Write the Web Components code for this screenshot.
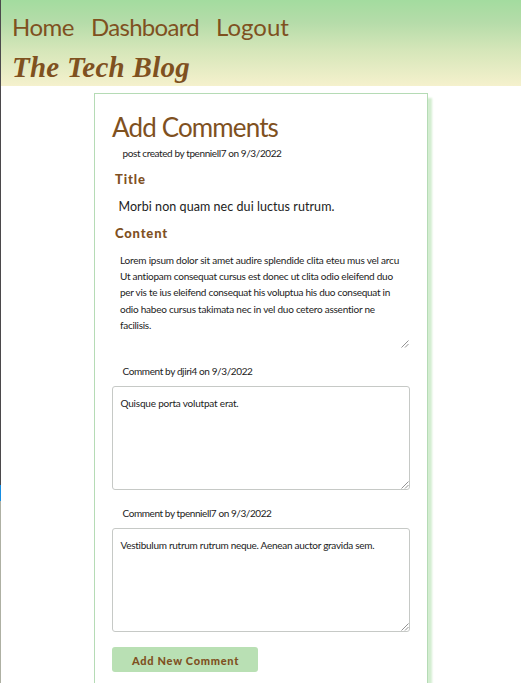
<!DOCTYPE html>
<html lang="en">
<head>
<meta charset="utf-8">
<title>The Tech Blog</title>
<style>html,body{margin:0;height:100%;overflow:hidden;background:#fff}</style>
</head>
<body>
<blog-page></blog-page>
<script>
const define = (name, html, setup) => customElements.define(name, class extends HTMLElement {
  constructor() {
    super();
    this.attachShadow({mode: 'open'}).innerHTML = html;
  }
  connectedCallback() { if (setup) setup(this); }
});

// One line of text; "w" is its measure, reached by adjusting the tracking.
define('text-line', `<style>
  :host{display:block;white-space:nowrap;line-height:16px;font-size:10px}
  span{display:inline-block}
</style><span></span>`, el => {
  const span = el.shadowRoot.querySelector('span');
  span.textContent = el.getAttribute('text');
  const w = +el.getAttribute('w');
  const n = span.textContent.length;
  span.style.letterSpacing = (w - span.getBoundingClientRect().width) / n + 'px';
});

define('site-header', `<style>
  :host{display:block;box-sizing:border-box;height:86px;margin-right:1px;padding:12px 0 0 11px;color:#7f511f;
    background:linear-gradient(#a3dc9f 0,#b5dca9 26%,#d5e6b9 58%,#f5f1cd 100%)}
  nav{display:flex;gap:17px}
  nav text-line{font-size:24px;line-height:30px}
  .logo{font:italic bold 29px/38px "Liberation Serif",serif;margin-top:6px}
</style>
<nav><text-line text="Home" w="62"></text-line><text-line text="Dashboard" w="108"></text-line><text-line text="Logout" w="73"></text-line></nav>
<text-line class="logo" text="The Tech Blog" w="178"></text-line>`);

define('text-box', `<style>
  :host{display:block;position:relative;box-sizing:border-box;width:298px;height:104px;padding:8px 8px 0 7.5px;
    border:1px solid #c6c9c6;border-radius:3px}
  :host([plain]){border-color:transparent}
  svg{position:absolute;right:0;bottom:0}
  :host([plain]) svg{bottom:-1px}
</style><slot></slot>
<svg width="8" height="8" viewBox="0 0 8 8" fill="none" stroke="#777" stroke-width=".8"><path d="M.5 7.5l7-7M4 7.5l3.5-3.5"/></svg>`);

define('action-button', `<style>
  :host{display:block}
  button{display:block;box-sizing:border-box;width:146px;height:25px;margin:0;padding:3px 0 0 20px;border:0;border-radius:3px;
    background:#b9e0b4;color:#7f511f;font:inherit;text-align:left}
  text-line{font-size:11px;font-weight:900}
</style><button><text-line text="Add New Comment" w="107"></text-line></button>`);

define('comment-card', `<style>
  :host{display:block;box-sizing:border-box;width:334px;height:640px;margin:7px 0 0 93px;padding:18px 0 0 17px;
    border:1px solid #b5dbb5;box-shadow:4px 5px 2px #d3edd0}
  h1,h2{margin:0;font-weight:400;color:#7f511f}
  h1 text-line{font-size:26px;line-height:30px}
  h2{padding-left:3px}
  h2 text-line{font-size:13px;font-weight:900}
  .meta{padding-left:10.5px;margin-top:3px}
  .t{margin-top:10px}
  .title{font-size:12.5px;padding-left:6.5px;margin:12px 0 10px}
  .body{height:105px;margin-top:2px}
  .body text-line{margin-bottom:.2px;margin-left:-.5px}
  .c1{margin-top:15px}
  .c2{margin-top:15px}
  .box{margin-top:7px}
  action-button{margin-top:15px}
</style>
<h1><text-line text="Add Comments" w="166"></text-line></h1>
<text-line class="meta" text="post created by tpenniell7 on 9/3/2022" w="159"></text-line>
<h2 class="t"><text-line text="Title" w="31"></text-line></h2>
<text-line class="title" text="Morbi non quam nec dui luctus rutrum." w="216"></text-line>
<h2><text-line text="Content" w="53"></text-line></h2>
<text-box plain class="body">
  <text-line text="Lorem ipsum dolor sit amet audire splendide clita eteu mus vel arcu" w="279"></text-line>
  <text-line text="Ut antiopam consequat cursus est donec ut clita odio eleifend duo" w="273"></text-line>
  <text-line text="per vis te ius eleifend consequat his voluptua his duo consequat in" w="270"></text-line>
  <text-line text="odio habeo cursus takimata nec in vel duo cetero assentior ne" w="255"></text-line>
  <text-line text="facilisis." w="31"></text-line>
</text-box>
<text-line class="meta c1" text="Comment by djiri4 on 9/3/2022" w="130"></text-line>
<text-box class="box"><text-line text="Quisque porta volutpat erat." w="118"></text-line></text-box>
<text-line class="meta c2" text="Comment by tpenniell7 on 9/3/2022" w="149"></text-line>
<text-box class="box"><text-line text="Vestibulum rutrum rutrum neque. Aenean auctor gravida sem." w="254"></text-line></text-box>
<action-button></action-button>`);

define('blog-page', `<style>
  :host{display:grid;grid-template-columns:1px 1fr;height:683px;overflow:hidden;color:#222;font-family:Lato,sans-serif}
  .edge{background:linear-gradient(#4b494b 485px,#168de2 485px 501px,#aeb0a3 501px)}
</style><div class="edge"></div><main><site-header></site-header><comment-card></comment-card></main>`);
</script>
</body>
</html>
